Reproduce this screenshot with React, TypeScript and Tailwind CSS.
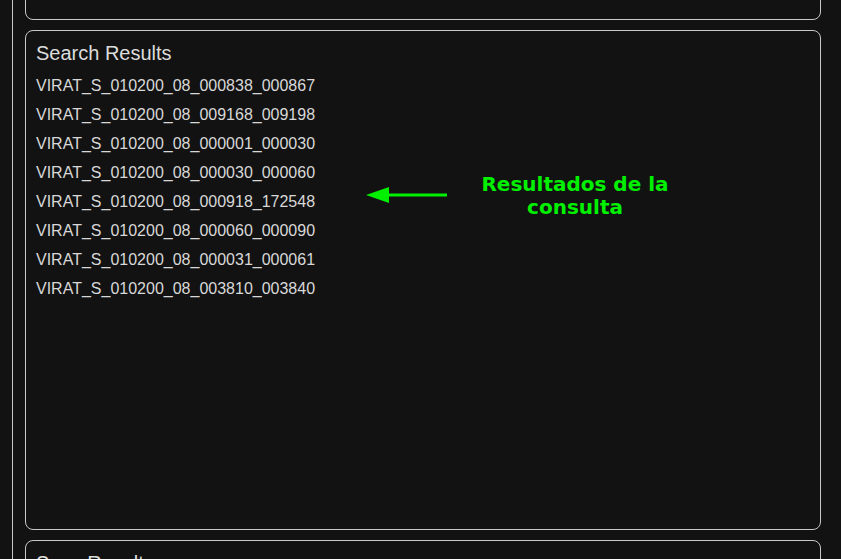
const results = [
  'VIRAT_S_010200_08_000838_000867',
  'VIRAT_S_010200_08_009168_009198',
  'VIRAT_S_010200_08_000001_000030',
  'VIRAT_S_010200_08_000030_000060',
  'VIRAT_S_010200_08_000918_172548',
  'VIRAT_S_010200_08_000060_000090',
  'VIRAT_S_010200_08_000031_000061',
  'VIRAT_S_010200_08_003810_003840',
]

function Panel({ className, children }: { className?: string; children?: React.ReactNode }) {
  return (
    <div className={`shrink-0 rounded-lg border border-[#c8c8c8] p-[10px] ${className ?? ''}`}>
      {children}
    </div>
  )
}

export default function App() {
  return (
    <div className="h-[559px] overflow-hidden bg-[#121212] font-['Liberation_Sans',Arial,sans-serif]">
      <div className="ml-[12px] flex h-full flex-col gap-[10px] border-l border-[#c8c8c8] pl-[12px] pr-[20px]">
        <Panel className="mt-[-81px] h-[101px]" />

        <Panel className="relative h-[500px]">
          <h2 className="mt-[1px] text-[20px] leading-[23px] text-[#dcdcdc]">Search Results</h2>
          <ul className="mt-[6px]">
            {results.map((r) => (
              <li key={r} className="h-[29px] text-[16px] leading-[29px] text-[#d8d8d8]">
                {r}
              </li>
            ))}
          </ul>

          {/* annotation */}
          <svg className="absolute left-[339px] top-[155px]" width="84" height="20" viewBox="0 0 84 20">
            <polygon points="1,9 24,1 24,17" fill="#00f000" />
            <rect x="23" y="7.5" width="59" height="3" fill="#00f000" />
          </svg>
          <div className="absolute left-[444px] top-[142px] w-[210px] text-center font-['DejaVu_Sans',sans-serif] text-[20px] font-bold leading-[23px] text-[#00f000]">
            Resultados de la
            <br />
            consulta
          </div>
        </Panel>

        <Panel className="h-[200px]">
          <h2 className="mt-[1px] text-[20px] leading-[23px] text-[#dcdcdc]">Scan Results</h2>
        </Panel>
      </div>
    </div>
  )
}
